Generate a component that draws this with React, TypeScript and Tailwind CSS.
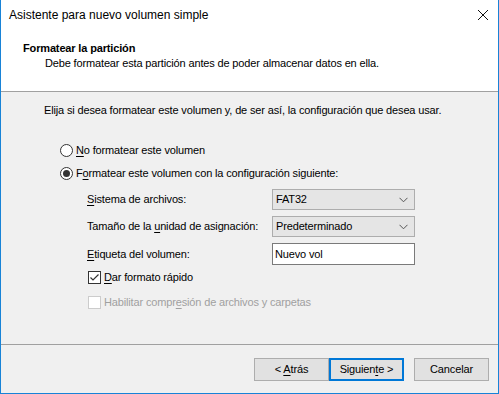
import React from "react";

const U = ({ children }: { children: React.ReactNode }) => <span className="underline underline-offset-2">{children}</span>;

function Radio({ checked }: { checked?: boolean }) {
  return (
    <span className="w-[13px] h-[13px] rounded-full border border-[#333333] bg-white flex items-center justify-center shrink-0">
      {checked && <span className="w-[7px] h-[7px] rounded-full bg-[#333333]" />}
    </span>
  );
}

function Check({ checked, disabled }: { checked?: boolean; disabled?: boolean }) {
  return (
    <span
      className={
        "w-[13px] h-[13px] border bg-white flex items-center justify-center shrink-0 " +
        (disabled ? "border-[#cccccc]" : "border-[#333333]")
      }
    >
      {checked && (
        <svg width="11" height="11" viewBox="0 0 11 11">
          <path d="M1.5 5.5 L4 8 L9.5 2.5" stroke="#333" strokeWidth="1.2" fill="none" />
        </svg>
      )}
    </span>
  );
}

function Combo({ value }: { value: string }) {
  return (
    <div className="w-[143px] h-[21px] bg-[#e5e5e5] border border-[#adadad] flex items-center justify-between pl-[3px] pr-[6px]">
      <span>{value}</span>
      <svg width="9" height="6" viewBox="0 0 9 6">
        <path d="M0.5 0.8 L4.5 4.8 L8.5 0.8" stroke="#555" strokeWidth="1" fill="none" />
      </svg>
    </div>
  );
}

function Btn({ children, primary }: { children: React.ReactNode; primary?: boolean }) {
  return (
    <div
      className={
        "w-[75px] h-[23px] bg-[#e1e1e1] flex items-center justify-center " +
        (primary ? "border-2 border-[#0078d7]" : "border border-[#adadad]")
      }
    >
      <span>{children}</span>
    </div>
  );
}

export default function App() {
  return (
    <div
      className="w-[499px] h-[394px] flex flex-col border-x border-b border-[#1883d7] text-[11px] leading-[15px] tracking-[-0.15px] text-black overflow-hidden"
      style={{ fontFamily: '"Liberation Sans", Arial, sans-serif' }}
    >
      <div className="bg-white h-[91px] flex flex-col shrink-0">
        <div className="h-[30px] flex items-center justify-between pl-[8px] pr-[9px]">
          <span className="text-[12px] tracking-normal">Asistente para nuevo volumen simple</span>
          <svg width="12" height="12" viewBox="0 0 12 12">
            <path d="M1 1 L11 11 M11 1 L1 11" stroke="#111" strokeWidth="1" />
          </svg>
        </div>
        <div className="pl-[22px] mt-[11px] font-bold">Formatear la partición</div>
        <div className="pl-[44px]">Debe formatear esta partición antes de poder almacenar datos en ella.</div>
      </div>
      <div className="h-px bg-[#a0a0a0] shrink-0" />
      <div className="flex-1 bg-[#f0f0f0] flex flex-col">
        <div className="pl-[43px] pt-[11px]">
          Elija si desea formatear este volumen y, de ser así, la configuración que desea usar.
        </div>
        <div className="pl-[59px] mt-[25px] flex items-center gap-[3px]">
          <Radio />
          <span>
            <U>N</U>o formatear este volumen
          </span>
        </div>
        <div className="pl-[59px] mt-[8px] flex items-center gap-[3px]">
          <Radio checked />
          <span>
            F<U>o</U>rmatear este volumen con la configuración siguiente:
          </span>
        </div>
        <div className="pl-[86px] mt-[8px] grid grid-cols-[185px_143px] gap-y-[6px] items-center">
          <span>
            <U>S</U>istema de archivos:
          </span>
          <Combo value="FAT32" />
          <span>
            Tamaño de la <U>u</U>nidad de asignación:
          </span>
          <Combo value="Predeterminado" />
          <span>
            <U>E</U>tiqueta del volumen:
          </span>
          <div className="w-[143px] h-[22px] bg-white border border-[#7a7a7a] flex items-center pl-[2px]">Nuevo vol</div>
        </div>
        <div className="pl-[87px] mt-[5px] flex items-center gap-[3px]">
          <Check checked />
          <span>
            <U>D</U>ar formato rápido
          </span>
        </div>
        <div className="pl-[87px] mt-[10px] flex items-center gap-[3px] text-[#a0a0a0]">
          <Check disabled />
          <span>
            Habilitar compr<U>e</U>sión de archivos y carpetas
          </span>
        </div>
        <div className="flex-1" />
        <div className="h-px bg-[#a0a0a0]" />
        <div className="h-[48px] flex items-center pl-[253px]">
          <Btn>
            &lt; <U>A</U>trás
          </Btn>
          <Btn primary>
            Siguien<U>t</U>e &gt;
          </Btn>
          <div className="w-[10px]" />
          <Btn>Cancelar</Btn>
        </div>
      </div>
    </div>
  );
}
